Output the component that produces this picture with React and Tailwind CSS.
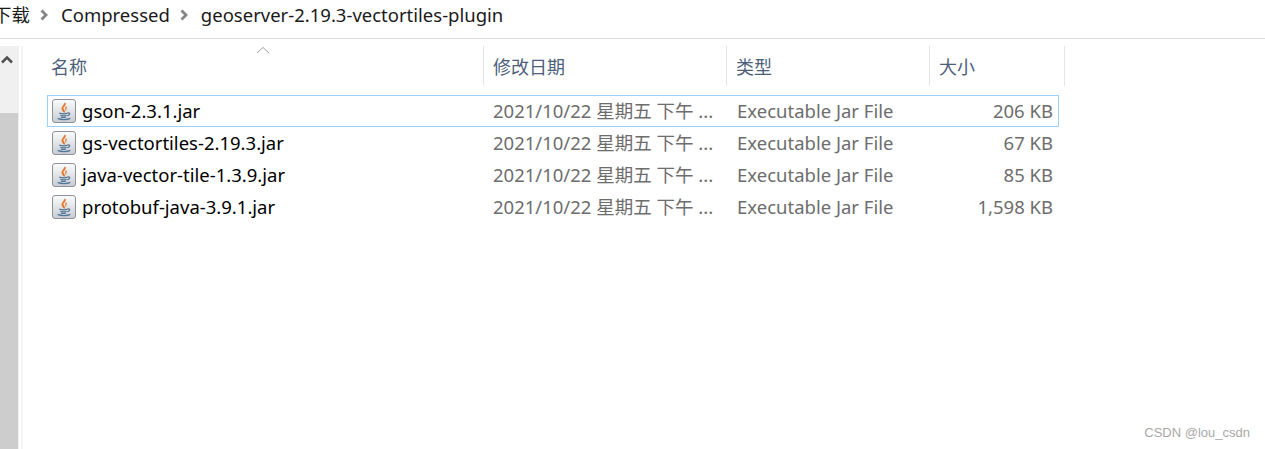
import React from "react";

const files = [
  { name: "gson-2.3.1.jar", size: "206 KB", focused: true },
  { name: "gs-vectortiles-2.19.3.jar", size: "67 KB" },
  { name: "java-vector-tile-1.3.9.jar", size: "85 KB" },
  { name: "protobuf-java-3.9.1.jar", size: "1,598 KB" },
];

const font = "font-['Noto_Sans','Noto_Sans_CJK_SC',sans-serif]";

function JarIcon() {
  return (
    <div className="w-6 h-6 shrink-0 rounded-[3px] border border-[#8d9299] bg-gradient-to-b from-[#fbfbfb] to-[#c9cdd3] flex items-center justify-center">
      <svg width="18" height="19" viewBox="0 0 16 18" fill="none">
        <path d="M8.5 1C10 3 6 4.500 6.500 6.500C7 8 8.500 8.500 8 10" stroke="#e2762a" strokeWidth="1.800" />
        <path d="M10.500 4.500C9.500 5.500 9 6.500 9.800 8" stroke="#e2762a" strokeWidth="1.200" />
        <path d="M3.500 10.500C5.500 11.500 9.500 11.500 11.500 10.500M4.500 12.500C6 13.200 9 13.200 10.500 12.500M5 14.200C6.500 14.800 8.500 14.800 10 14.200" stroke="#4f7596" strokeWidth="1.100" />
        <path d="M11.500 10.300C14 9.800 14 12.500 11 13M2 15.500C5 17 11 17 14 15.500" stroke="#4f7596" strokeWidth="1.100" />
      </svg>
    </div>
  );
}

function Crumb({ children }) {
  return <span className="text-[18.500px] leading-none text-[#1a1a1a] whitespace-nowrap">{children}</span>;
}

function Sep() {
  return (
    <svg className="ml-[10px] mr-[12px] shrink-0" width="9" height="12" viewBox="0 0 9 12" fill="none">
      <path d="M1.500 1.500L6 6L1.500 10.500" stroke="#858585" strokeWidth="2.800" />
    </svg>
  );
}

function HeaderCell({ className, children }) {
  return (
    <div className={`h-10 pt-[2px] flex items-center border-r border-[#e5e5e5] text-[18px] text-[#4c607a] ${className}`}>
      {children}
    </div>
  );
}

export default function App() {
  return (
    <div className={`relative w-[1265px] h-[449px] overflow-hidden bg-white ${font}`}>
      <div className="h-[39px] border-b border-[#dcdcdc] flex items-center -ml-[7px] pb-[8px]">
        <Crumb>下载</Crumb>
        <Sep />
        <Crumb>Compressed</Crumb>
        <Sep />
        <Crumb>geoserver-2.19.3-vectortiles-plugin</Crumb>
      </div>

      <div className="flex pt-[7px] h-[410px]">
        <div className="w-[19px] shrink-0 bg-[#f0f0f0] flex flex-col">
          <div className="h-[67px] pt-[9px] pl-[1px]">
            <svg width="12" height="9" viewBox="0 0 12 9" fill="none">
              <path d="M1 7.500L6 2.500L11 7.500" stroke="#505050" strokeWidth="2.500" />
            </svg>
          </div>
          <div className="flex-1 w-[18px] bg-[#cdcdcd]" />
        </div>
        <div className="w-[2px] ml-[2px] bg-[#f4f4f4]" />

        <div className="pl-[27px] flex-1 relative">
          <svg className="absolute left-[233px] top-[0px]" width="14" height="8" viewBox="0 0 14 8" fill="none">
            <path d="M1 7L7 1.500L13 7" stroke="#a0a0a0" strokeWidth="1" />
          </svg>

          <div className="flex -ml-[2px]">
            <HeaderCell className="w-[436px] pl-[3px]">名称</HeaderCell>
            <HeaderCell className="w-[243px] pl-[9px]">修改日期</HeaderCell>
            <HeaderCell className="w-[203px] pl-[9px]">类型</HeaderCell>
            <HeaderCell className="w-[135px] pl-[9px]">大小</HeaderCell>
          </div>

          <div className="mt-[9px] -ml-[3px]">
            {files.map((f) => (
              <div
                key={f.name}
                className={`h-8 w-[1012px] flex items-center border text-[18.500px] ${
                  f.focused ? "border-[#99d1ff]" : "border-transparent"
                }`}
              >
                <div className="w-[436px] pl-[4px] flex items-center gap-[6px] text-black whitespace-nowrap">
                  <JarIcon />
                  <span>{f.name}</span>
                </div>
                <div className="w-[243px] pl-[9px] text-[#6d6d6d] whitespace-nowrap">2021/10/22 星期五 下午 ...</div>
                <div className="w-[203px] pl-[10px] text-[#6d6d6d] whitespace-nowrap">Executable Jar File</div>
                <div className="w-[123px] text-right text-[#6d6d6d] whitespace-nowrap">{f.size}</div>
              </div>
            ))}
          </div>
        </div>
      </div>

      <span className="absolute right-[15px] bottom-[10px] text-[13px] leading-none text-[#a8a8a8] font-['Liberation_Sans',sans-serif]">
        CSDN @lou_csdn
      </span>
    </div>
  );
}
